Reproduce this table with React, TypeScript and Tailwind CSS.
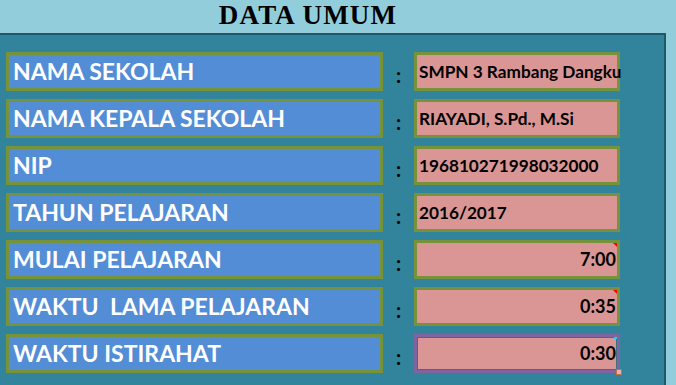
import React from 'react';

// ==========================================
// Data
// ==========================================

interface Row {
  label: string;
  value: string;
  align: 'left' | 'right';
  note?: boolean;
  selected?: boolean;
}

const rows: Row[] = [
  { label: 'NAMA SEKOLAH', value: 'SMPN 3 Rambang Dangku', align: 'left' },
  { label: 'NAMA KEPALA SEKOLAH', value: 'RIAYADI, S.Pd., M.Si', align: 'left' },
  { label: 'NIP', value: '196810271998032000', align: 'left' },
  { label: 'TAHUN PELAJARAN', value: '2016/2017', align: 'left' },
  { label: 'MULAI PELAJARAN', value: '7:00', align: 'right', note: true },
  { label: 'WAKTU  LAMA PELAJARAN', value: '0:35', align: 'right', note: true },
  { label: 'WAKTU ISTIRAHAT', value: '0:30', align: 'right', selected: true },
];

const sans = "font-['Lato','Open_Sans',sans-serif]";

// ==========================================
// Components
// ==========================================

const ValueCell: React.FC<{ row: Row }> = ({ row }) => {
  const border = row.selected ? 'border-[#8064A2]' : 'border-[#76933C]';
  return (
    <div className={`relative w-[206px] h-full border-[3px] ${border} bg-[#DA9694]`}>
      {row.selected && (
        <div className="absolute inset-0 border border-[#3f6f7a]" />
      )}
      <div
        className={`relative h-full flex items-center whitespace-nowrap font-bold text-black ${sans} ${
          row.align === 'right' ? 'justify-end pr-[1px] text-[18px]' : 'pl-[2px] text-[17.2px]'
        }`}
      >
        <span className={row.align === 'left' ? 'relative z-10' : ''}>{row.value}</span>
      </div>
      {row.note && (
        <div className="absolute top-0 right-0 w-0 h-0 border-t-[4px] border-l-[4px] border-t-[#ff0000] border-l-transparent" />
      )}
      {row.selected && (
        <>
          <div className="absolute top-0 right-0 w-[3px] h-[2px] bg-[#22d3ee]" />
          <div className="absolute -bottom-[5px] -right-[5px] w-[6px] h-[6px] border border-[#c0704d] bg-[#e8b5a8]" />
        </>
      )}
    </div>
  );
};

export default function App() {
  return (
    <div className="w-[676px] h-[385px] overflow-hidden bg-[#92CDDC] flex flex-col">
      {/* Title */}
      <div className="h-[33px] flex justify-center items-start">
        <h1 className="ml-[-60px] text-[27px] leading-[30px] font-black tracking-[1.2px] text-black font-['Liberation_Serif','DejaVu_Serif',serif]">
          DATA UMUM
        </h1>
      </div>

      {/* Panel */}
      <div className="w-[666px] flex-1 bg-[#31849B] border-t-2 border-r-2 border-[#215868] pt-[17px] pl-[6px]">
        <div className="flex flex-col gap-[8px]">
          {rows.map((row, idx) => (
            <div key={idx} className="flex items-center h-[39px]">
              <div className="w-[377px] h-full border-[3px] border-[#76933C] bg-[#538DD5] flex items-center pl-[4px]">
                <span className={`text-[23px] font-bold text-white whitespace-pre ${sans}`}>
                  {row.label}
                </span>
              </div>
              <div className={`w-[31px] flex justify-center pt-[6px] text-[20px] font-bold text-black ${sans}`}>
                :
              </div>
              <ValueCell row={row} />
            </div>
          ))}
        </div>
      </div>
    </div>
  );
}
